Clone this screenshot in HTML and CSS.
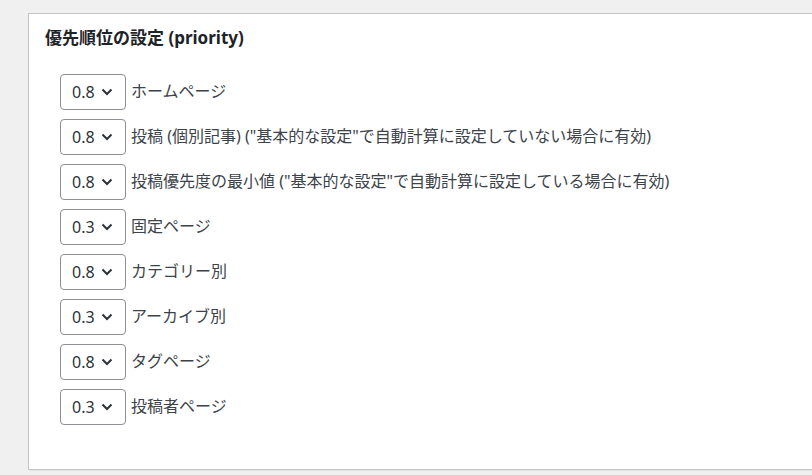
FILE: index.html
```html
<!DOCTYPE html>
<html lang="ja">
<head>
    <meta charset="UTF-8">
    <title>優先順位の設定</title>
    <link rel="stylesheet" href="styles.css">
</head>
<body>

<div class="panel">
    <h2 class="panel-title">優先順位の設定 (priority)</h2>
    <ul class="priority-list">
        <li class="priority-row">
            <div class="select"><span>0.8</span><svg width="12" height="8" viewBox="0 0 12 8"><path d="M1.5 1.5 L6 6 L10.5 1.5" fill="none" stroke="#2c3338" stroke-width="2"/></svg></div>
            <label>ホームページ</label>
        </li>
        <li class="priority-row">
            <div class="select"><span>0.8</span><svg width="12" height="8" viewBox="0 0 12 8"><path d="M1.5 1.5 L6 6 L10.5 1.5" fill="none" stroke="#2c3338" stroke-width="2"/></svg></div>
            <label>投稿 (個別記事) ("基本的な設定"で自動計算に設定していない場合に有効)</label>
        </li>
        <li class="priority-row">
            <div class="select"><span>0.8</span><svg width="12" height="8" viewBox="0 0 12 8"><path d="M1.5 1.5 L6 6 L10.5 1.5" fill="none" stroke="#2c3338" stroke-width="2"/></svg></div>
            <label>投稿優先度の最小値 ("基本的な設定"で自動計算に設定している場合に有効)</label>
        </li>
        <li class="priority-row">
            <div class="select"><span>0.3</span><svg width="12" height="8" viewBox="0 0 12 8"><path d="M1.5 1.5 L6 6 L10.5 1.5" fill="none" stroke="#2c3338" stroke-width="2"/></svg></div>
            <label>固定ページ</label>
        </li>
        <li class="priority-row">
            <div class="select"><span>0.8</span><svg width="12" height="8" viewBox="0 0 12 8"><path d="M1.5 1.5 L6 6 L10.5 1.5" fill="none" stroke="#2c3338" stroke-width="2"/></svg></div>
            <label>カテゴリー別</label>
        </li>
        <li class="priority-row">
            <div class="select"><span>0.3</span><svg width="12" height="8" viewBox="0 0 12 8"><path d="M1.5 1.5 L6 6 L10.5 1.5" fill="none" stroke="#2c3338" stroke-width="2"/></svg></div>
            <label>アーカイブ別</label>
        </li>
        <li class="priority-row">
            <div class="select"><span>0.8</span><svg width="12" height="8" viewBox="0 0 12 8"><path d="M1.5 1.5 L6 6 L10.5 1.5" fill="none" stroke="#2c3338" stroke-width="2"/></svg></div>
            <label>タグページ</label>
        </li>
        <li class="priority-row">
            <div class="select"><span>0.3</span><svg width="12" height="8" viewBox="0 0 12 8"><path d="M1.5 1.5 L6 6 L10.5 1.5" fill="none" stroke="#2c3338" stroke-width="2"/></svg></div>
            <label>投稿者ページ</label>
        </li>
    </ul>
</div>

</body>
</html>
```

FILE: styles.css
```css
html, body {
  margin: 0;
  width: 100vw;
  height: 100vh;
  overflow: hidden;
  background: #f0f0f1;
  font-family: 'Noto Sans', 'Noto Sans CJK JP', sans-serif;
  color: #3c434a;
}

body {
  padding: 13px 0 0 28px;
  box-sizing: border-box;
}

.panel {
  background: #fff;
  border: 1px solid #c3c4c7;
  border-right: none;
  box-shadow: 0 1px 1px rgba(0, 0, 0, 0.04);
  padding: 12px 0 44px 16px;
}

.panel-title {
  margin: 0;
  font-size: 17px;
  line-height: 24px;
  font-weight: 700;
  color: #1d2327;
}

.priority-list {
  list-style: none;
  margin: 24px 0 0;
  padding: 0 0 0 15px;
  display: flex;
  flex-direction: column;
  gap: 9px;
}

.priority-row {
  display: flex;
  align-items: center;
  gap: 5px;
  font-size: 16px;
}

.priority-row label {
  padding-bottom: 4px;
}

.select {
  width: 66px;
  height: 36px;
  box-sizing: border-box;
  border: 1px solid #8c8f94;
  border-radius: 4px;
  display: flex;
  align-items: center;
  justify-content: space-between;
  padding: 0 12px 0 11px;
  color: #2c3338;
  font-size: 16px;
}

.select svg {
  display: block;
}
```
